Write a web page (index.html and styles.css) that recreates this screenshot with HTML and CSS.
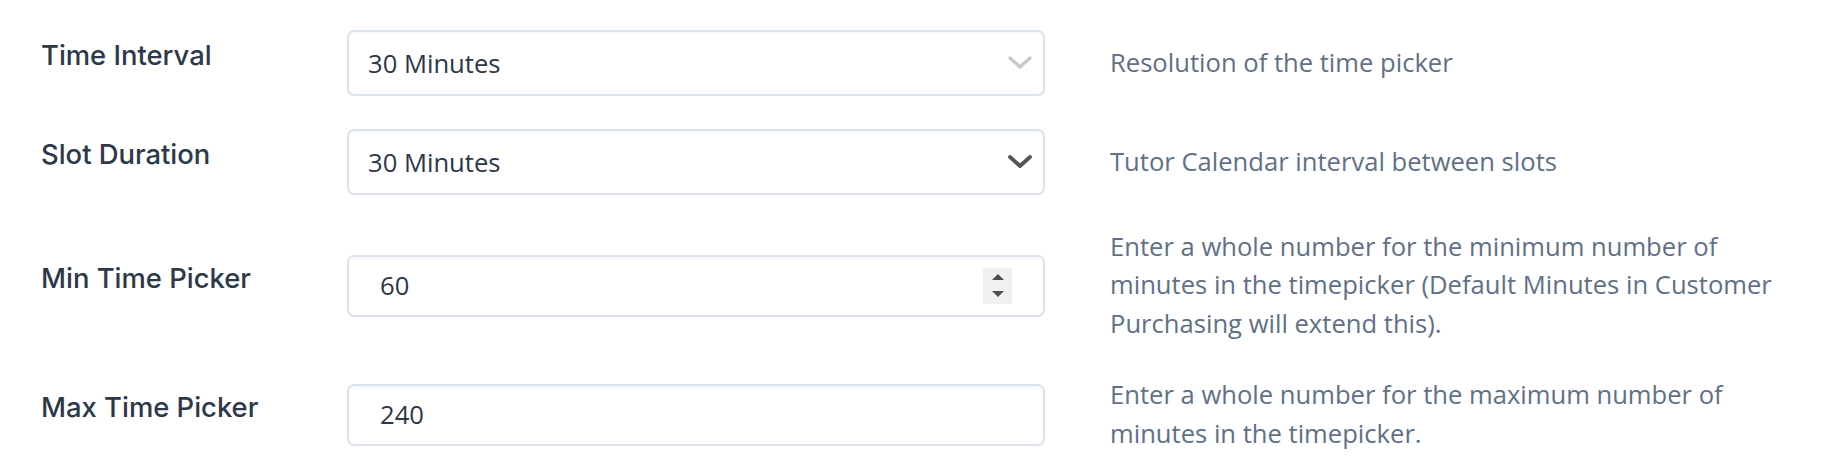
FILE: index.html
```html
<!DOCTYPE html>
<html lang="en">
<head>
<meta charset="utf-8">
<title>Time settings</title>
<link rel="stylesheet" href="styles.css">
</head>
<body>
<div class="form">
  <div class="row">
    <div class="label">Time Interval</div>
    <div class="field select">
      <span class="value">30 Minutes</span>
      <svg class="chev chev-light" width="24" height="14" viewBox="0 0 24 14"><path d="M2 2 L12 11 L22 2" fill="none" stroke="currentColor" stroke-width="3.4" stroke-linecap="round" stroke-linejoin="round"/></svg>
    </div>
    <div class="desc">Resolution of the time picker</div>
  </div>
  <div class="row">
    <div class="label">Slot Duration</div>
    <div class="field select">
      <span class="value">30 Minutes</span>
      <svg class="chev chev-dark" width="24" height="14" viewBox="0 0 24 14"><path d="M2 2 L12 11 L22 2" fill="none" stroke="currentColor" stroke-width="3.8" stroke-linecap="round" stroke-linejoin="round"/></svg>
    </div>
    <div class="desc">Tutor Calendar interval between slots</div>
  </div>
  <div class="row">
    <div class="label">Min Time Picker</div>
    <div class="field number">
      <span class="value">60</span>
      <div class="spinner">
        <svg width="14" height="8" viewBox="0 0 14 8"><path d="M1 7 L7 1 L13 7 Z" fill="currentColor"/></svg>
        <svg width="14" height="8" viewBox="0 0 14 8"><path d="M1 1 L13 1 L7 7 Z" fill="currentColor"/></svg>
      </div>
    </div>
    <div class="desc">Enter a whole number for the minimum number of minutes in the timepicker (Default Minutes in Customer Purchasing will extend this).</div>
  </div>
  <div class="row">
    <div class="label">Max Time Picker</div>
    <div class="field number">
      <span class="value">240</span>
    </div>
    <div class="desc">Enter a whole number for the maximum number of minutes in the timepicker.</div>
  </div>
</div>
</body>
</html>
```
FILE: styles.css
```css
html, body {
  margin: 0;
  padding: 0;
  background: #ffffff;
}

.form {
  display: flex;
  flex-direction: column;
  gap: 33px;
  padding: 30px 40px 0 41px;
}

.row {
  display: grid;
  grid-template-columns: 241px 698px 1fr;
  column-gap: 65px;
  align-items: center;
}

.label {
  font-family: "Inter", "Liberation Sans", sans-serif;
  font-weight: 500;
  font-size: 27.4px;
  line-height: 32px;
  color: #2d3849;
  margin-bottom: 16px;
}

.field {
  box-sizing: border-box;
  display: flex;
  align-items: center;
  border: 2px solid #dce3ee;
  border-radius: 7px;
  background: #ffffff;
  box-shadow: inset 0 2px 3px rgba(30, 50, 90, 0.04);
  font-family: "Open Sans", "Liberation Sans", sans-serif;
  font-size: 25.6px;
  color: #2d3748;
}

.select {
  height: 66px;
  padding: 0 11px 0 19px;
  justify-content: space-between;
}

.number {
  height: 62px;
  padding: 0 31px 0 31px;
  justify-content: space-between;
}

.chev-light {
  color: #c9c9c9;
}

.chev-dark {
  color: #555555;
}

.spinner {
  display: flex;
  flex-direction: column;
  align-items: center;
  justify-content: center;
  gap: 9px;
  width: 29px;
  height: 36px;
  background: #f0f0f0;
  color: #4f4f4f;
}

.spinner svg {
  display: block;
}

.desc {
  font-family: "Open Sans", "Liberation Sans", sans-serif;
  font-size: 25.6px;
  line-height: 38.4px;
  color: #617087;
}
```
